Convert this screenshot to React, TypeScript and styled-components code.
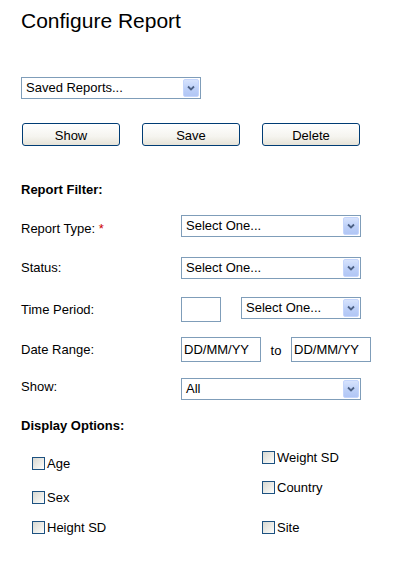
import React from "react";
import styled, { createGlobalStyle } from "styled-components";

const GlobalStyle = createGlobalStyle`
  html, body {
    margin: 0;
    padding: 0;
    background: #ffffff;
  }
  body {
    font-family: "Liberation Sans", Arial, sans-serif;
    font-size: 13px;
    color: #000000;
  }
`;

const Page = styled.div`
  width: 409px;
  height: 570px;
  padding-left: 21px;
  box-sizing: border-box;
  overflow: hidden;
`;

const Title = styled.h1`
  margin: 9px 0 0 0;
  font-size: 21px;
  line-height: 24px;
  font-weight: normal;
`;

const SelectBox = styled.div<{ width: number; top?: number }>`
  width: ${(p) => p.width}px;
  height: 22px;
  margin-top: ${(p) => p.top || 0}px;
  box-sizing: border-box;
  border: 1px solid #7f9db9;
  background: #ffffff;
  display: flex;
  align-items: center;
  justify-content: space-between;
  padding: 0 1px 0 4px;
`;

const SelectText = styled.span`
  font-size: 13px;
  line-height: 16px;
  white-space: nowrap;
`;

const ArrowButton = styled.span`
  width: 16px;
  height: 18px;
  box-sizing: border-box;
  border: 1px solid #c4d5fc;
  border-radius: 2px;
  background: linear-gradient(180deg, #d7e3fd 0%, #bdd0f8 55%, #b1c6f5 100%);
  display: flex;
  align-items: center;
  justify-content: center;
`;

const ButtonRow = styled.div`
  display: flex;
  gap: 22px;
  margin-top: 24px;
  padding-left: 1px;
`;

const Button = styled.button`
  width: 98px;
  height: 23px;
  box-sizing: border-box;
  border: 1px solid #003c74;
  border-radius: 3px;
  background: linear-gradient(180deg, #ffffff 0%, #f5f4ef 60%, #e6e3d8 100%);
  font-family: "Liberation Sans", Arial, sans-serif;
  font-size: 13px;
  color: #000000;
  padding: 1px 0 0 0;
`;

const Heading = styled.div<{ top: number }>`
  margin-top: ${(p) => p.top}px;
  font-weight: bold;
  font-size: 13px;
  line-height: 16px;
`;

const FilterRow = styled.div<{ top: number }>`
  display: grid;
  grid-template-columns: 160px auto;
  align-items: center;
  margin-top: ${(p) => p.top}px;
`;

const Label = styled.span<{ shift?: number }>`
  line-height: 16px;
  position: relative;
  top: ${(p) => p.shift || 0}px;
`;

const Required = styled.span`
  color: #cc0000;
`;

const Controls = styled.div<{ gap?: number }>`
  display: flex;
  align-items: center;
  gap: ${(p) => p.gap || 0}px;
`;

const TextInput = styled.div<{ width: number }>`
  width: ${(p) => p.width}px;
  height: 25px;
  box-sizing: border-box;
  border: 1px solid #7f9db9;
  background: #ffffff;
  padding: 4px 0 0 2px;
  line-height: 16px;
  white-space: nowrap;
`;

const ToText = styled.span`
  padding: 2px 0 0 0;
  width: 30px;
  text-align: center;
`;

const OptionGrid = styled.div`
  display: grid;
  grid-template-columns: 230px auto;
  margin-left: 11px;
`;

const OptionColumn = styled.div`
  display: flex;
  flex-direction: column;
`;

const Option = styled.label<{ top: number }>`
  display: flex;
  align-items: center;
  height: 13px;
  margin-top: ${(p) => p.top}px;
  line-height: 13px;
`;

const CheckBox = styled.span`
  width: 13px;
  height: 13px;
  box-sizing: border-box;
  border: 1px solid #1c5180;
  background: linear-gradient(135deg, #d8d8d2 0%, #f2f2ee 70%, #ffffff 100%);
  margin-right: 2px;
  flex-shrink: 0;
`;

const Chevron = () => (
  <svg width="8" height="6" viewBox="0 0 8 6">
    <path d="M1 1.5 L4 4.5 L7 1.5" fill="none" stroke="#4d6185" strokeWidth="1.8" />
  </svg>
);

const Select = ({ text, width, top }: { text: string; width: number; top?: number }) => (
  <SelectBox width={width} top={top}>
    <SelectText>{text}</SelectText>
    <ArrowButton>
      <Chevron />
    </ArrowButton>
  </SelectBox>
);

const leftOptions = [
  { label: "Age", top: 23 },
  { label: "Sex", top: 21 },
  { label: "Height SD", top: 17 },
];

const rightOptions = [
  { label: "Weight SD", top: 17 },
  { label: "Country", top: 17 },
  { label: "Site", top: 27 },
];

export default function App() {
  return (
    <Page>
      <GlobalStyle />
      <Title>Configure Report</Title>
      <Select text="Saved Reports..." width={180} top={44} />
      <ButtonRow>
        <Button>Show</Button>
        <Button>Save</Button>
        <Button>Delete</Button>
      </ButtonRow>

      <Heading top={36}>Report Filter:</Heading>
      <FilterRow top={17}>
        <Label shift={3}>
          Report Type: <Required>*</Required>
        </Label>
        <Select text="Select One..." width={180} />
      </FilterRow>
      <FilterRow top={20}>
        <Label>Status:</Label>
        <Select text="Select One..." width={180} />
      </FilterRow>
      <FilterRow top={18}>
        <Label>Time Period:</Label>
        <Controls gap={20}>
          <TextInput width={40} />
          <Select text="Select One..." width={120} top={-3} />
        </Controls>
      </FilterRow>
      <FilterRow top={15}>
        <Label>Date Range:</Label>
        <Controls>
          <TextInput width={80}>DD/MM/YY</TextInput>
          <ToText>to</ToText>
          <TextInput width={80}>DD/MM/YY</TextInput>
        </Controls>
      </FilterRow>
      <FilterRow top={16}>
        <Label shift={-2}>Show:</Label>
        <Select text="All" width={180} />
      </FilterRow>

      <Heading top={18}>Display Options:</Heading>
      <OptionGrid>
        <OptionColumn>
          {leftOptions.map((o) => (
            <Option key={o.label} top={o.top}>
              <CheckBox />
              {o.label}
            </Option>
          ))}
        </OptionColumn>
        <OptionColumn>
          {rightOptions.map((o) => (
            <Option key={o.label} top={o.top}>
              <CheckBox />
              {o.label}
            </Option>
          ))}
        </OptionColumn>
      </OptionGrid>
    </Page>
  );
}
